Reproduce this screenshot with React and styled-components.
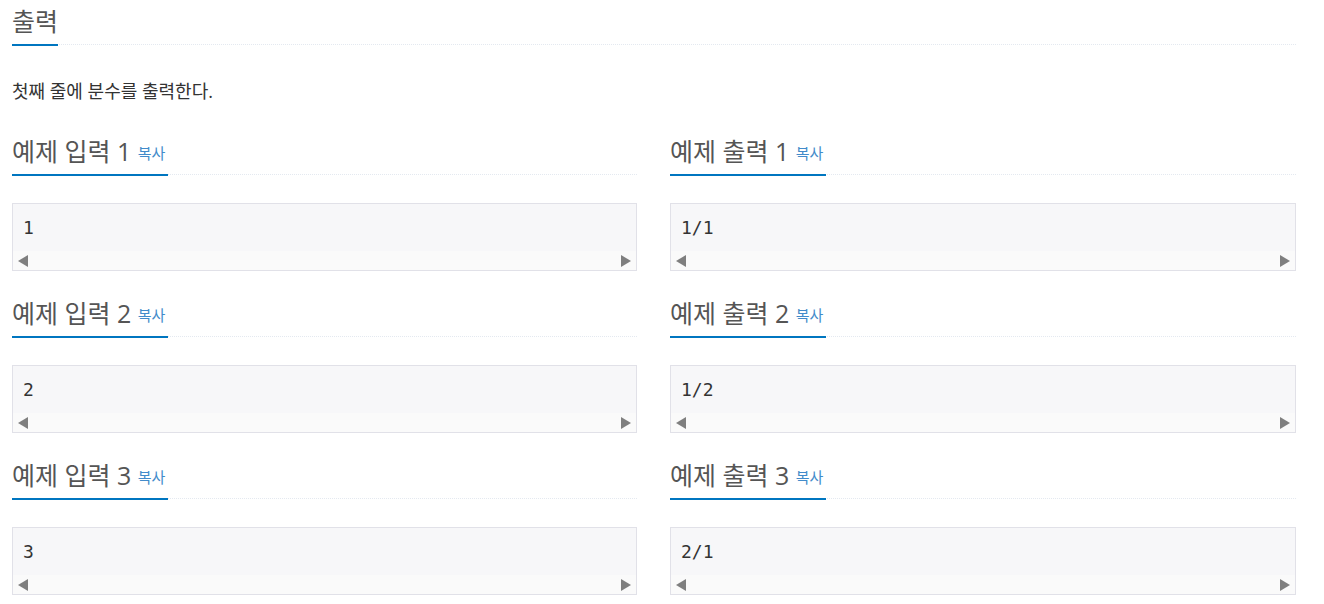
import React from "react";
import styled, { createGlobalStyle } from "styled-components";

const Global = createGlobalStyle`
  html, body { margin: 0; padding: 0; background: #fff; }
  body { font-family: "Open Sans", "Noto Sans CJK KR", sans-serif; color: #333; }
`;

const Page = styled.div`
  width: 1284px;
  padding: 3px 12px 0;
`;

const Headline = styled.div`
  border-bottom: 1px dotted #e4e9f0;
  margin-top: ${(p) => p.$top || 0}px;
  margin-bottom: ${(p) => p.$bottom || 0}px;
`;

const Title = styled.h2`
  display: inline-block;
  margin: 0 0 -2px 0;
  padding-bottom: 5px;
  padding-right: ${(p) => (p.$pad ? 3 : 0)}px;
  border-bottom: 2px solid #0076c0;
  font-size: 25px;
  line-height: 36px;
  font-weight: 400;
  color: #555;
`;

const Copy = styled.button`
  border: 0;
  background: none;
  padding: 0;
  font-family: "Open Sans", "Noto Sans CJK KR", sans-serif;
  font-size: 15px;
  color: #428bca;
  cursor: pointer;
  vertical-align: 2px;
`;

const Desc = styled.p`
  margin: 0;
  font-size: 18px;
  line-height: 24px;
  color: #333;
`;

const Grid = styled.div`
  display: grid;
  grid-template-columns: 625px 626px;
  column-gap: 33px;
`;

const Sample = styled.section`
  padding-top: ${(p) => p.$top}px;
`;

const Pre = styled.div`
  margin-top: 28px;
  border: 1px solid #e1e1e8;
  background: #f7f7f9;
`;

const PreText = styled.pre`
  margin: 0;
  padding: 10px 10px;
  font-family: "DejaVu Sans Mono", "Liberation Mono", monospace;
  font-size: 18px;
  line-height: 27px;
  color: #333;
`;

const Scrollbar = styled.div`
  height: 19px;
  background: #fafafa;
  display: flex;
  align-items: center;
  justify-content: space-between;
  padding: 0 5px;
`;

const Arrow = ({ dir }) => (
  <svg width="10" height="12" viewBox="0 0 10 12">
    {dir === "left" ? (
      <polygon points="10,0 10,12 0,6" fill="#7f7f7f" />
    ) : (
      <polygon points="0,0 0,12 10,6" fill="#7f7f7f" />
    )}
  </svg>
);

const SampleBox = ({ title, data, top }) => (
  <Sample $top={top}>
    <Headline>
      <Title $pad>
        {title} <Copy>복사</Copy>
      </Title>
    </Headline>
    <Pre>
      <PreText>{data}</PreText>
      <Scrollbar>
        <Arrow dir="left" />
        <Arrow dir="right" />
      </Scrollbar>
    </Pre>
  </Sample>
);

const samples = [
  ["1", "1/1"],
  ["2", "1/2"],
  ["3", "2/1"],
];

export default function App() {
  return (
    <>
      <Global />
      <Page>
        <Headline $bottom={34}>
          <Title>출력</Title>
        </Headline>
        <Desc>첫째 줄에 분수를 출력한다.</Desc>
        <Grid>
          {samples.map(([inp, out], i) => (
            <React.Fragment key={i}>
              <SampleBox title={`예제 입력 ${i + 1}`} data={inp} top={i === 0 ? 30 : 24} />
              <SampleBox title={`예제 출력 ${i + 1}`} data={out} top={i === 0 ? 30 : 24} />
            </React.Fragment>
          ))}
        </Grid>
      </Page>
    </>
  );
}
